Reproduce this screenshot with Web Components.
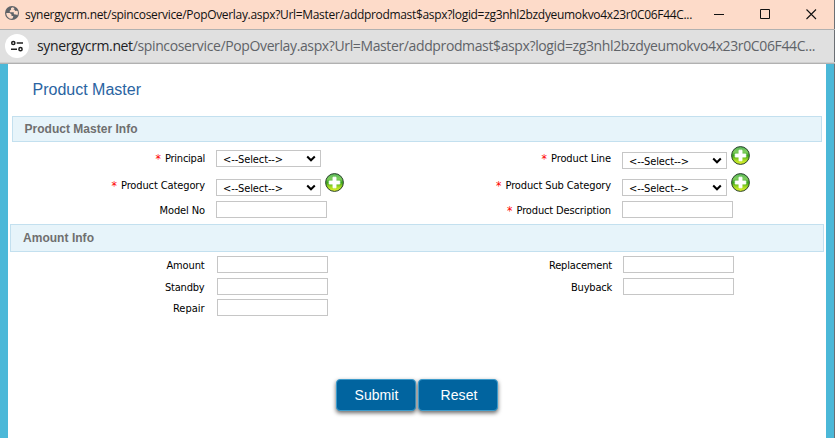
<!DOCTYPE html>
<html lang="en">
<head>
<meta charset="utf-8">
<title>Product Master</title>
<style>
html,body{margin:0;background:#fff;overflow:hidden}
body{width:835px;height:441px;font:11px/14px "DejaVu Sans Condensed","DejaVu Sans",sans-serif;color:#000}
</style>
</head>
<body>
<popup-window>
  <title-bar slot="title"><fit-text w="667">synergycrm.net/spincoservice/PopOverlay.aspx?Url=Master/addprodmast$aspx?logid=zg3nhl2bzdyeumokvo4x23r0C06F44C...</fit-text></title-bar>
  <address-bar slot="address"><fit-text w="778"><span style="color:#202124">synergycrm.net</span>/spincoservice/PopOverlay.aspx?Url=Master/addprodmast$aspx?logid=zg3nhl2bzdyeumokvo4x23r0C06F44C...</fit-text></address-bar>
  <page-heading><fit-text w="108.500">Product Master</fit-text></page-heading>
  <section-bar style="--m:0 4px;--h:26px;--p:11.500px"><fit-text w="113">Product Master Info</fit-text></section-bar>
  <form-row style="--h:31px">
    <form-field required label="Principal" w="40" style="--ct:8px"><select-box></select-box></form-field>
    <form-field required label="Product Line" w="60" style="--ct:10px"><select-box></select-box><add-button style="--t:4px"></add-button></form-field>
  </form-row>
  <form-row style="--h:25px">
    <form-field required label="Product Category" w="84" style="--ct:6px;--lt:6px"><select-box></select-box><add-button></add-button></form-field>
    <form-field required label="Product Sub Category" w="105.500" style="--ct:6px;--lt:6px"><select-box></select-box><add-button></add-button></form-field>
  </form-row>
  <form-row style="--h:26px">
    <form-field label="Model No" w="45.500" style="--ct:3px;--lt:6px"><text-box></text-box></form-field>
    <form-field required label="Product Description" w="94.500" style="--ct:3px;--lt:6px"><text-box></text-box></form-field>
  </form-row>
  <section-bar style="--m:0 2px;--h:28px"><fit-text w="71">Amount Info</fit-text></section-bar>
  <form-row style="--h:22px;--x:1px">
    <form-field label="Amount" w="38" style="--ct:4px;--lt:7px;--lw:195.500px"><text-box></text-box></form-field>
    <form-field label="Replacement" w="63" style="--ct:4px;--lt:7px"><text-box></text-box></form-field>
  </form-row>
  <form-row style="--h:21px;--x:1px">
    <form-field label="Standby" w="39.500" style="--ct:4px;--lt:7px;--lw:195.500px"><text-box></text-box></form-field>
    <form-field label="Buyback" w="41" style="--ct:4px;--lt:7px"><text-box></text-box></form-field>
  </form-row>
  <form-row style="--h:22px;--x:1px">
    <form-field label="Repair" w="31.500" style="--ct:4px;--lt:7px;--lw:195.500px"><text-box></text-box></form-field>
  </form-row>
  <button-row>
    <push-button><fit-text w="44">Submit</fit-text></push-button>
    <push-button style="--p:2px"><fit-text w="37">Reset</fit-text></push-button>
  </button-row>
</popup-window>
<script>
function define(name, html, setup) {
  customElements.define(name, class extends HTMLElement {
    constructor() {
      super();
      this.attachShadow({mode: 'open'});
    }
    connectedCallback() {
      if (this.ready) return;
      this.ready = true;
      this.shadowRoot.innerHTML = html;
      if (setup) setup(this, this.shadowRoot);
    }
  });
}

define('popup-window', `<style>
:host{display:flex;flex-direction:column;width:835px;height:441px}
.frame{display:flex;height:374px;box-sizing:border-box;border-right:1px solid #6b6f74}
.content{flex:1;border:solid #4bb8d8;border-width:0 8px;background:#fff;display:flex;flex-direction:column}
</style><slot name="title"></slot><slot name="address"></slot>
<div class="frame"><div class="content"><slot></slot></div></div>`);

define('title-bar', `<style>
:host{display:flex;align-items:center;height:29px;box-sizing:border-box;background:#fddbc9;border-right:1px solid #6b6f74;padding-left:5px;font:12px/16px "Open Sans","Noto Sans",sans-serif;color:#111}
.globe{width:14px;height:14px;margin-right:6px;margin-top:-3px;flex:none}
.label{flex:1}
.win{width:120px;height:29px;flex:none}
</style>
<svg class="globe" viewBox="0 0 14 14"><circle cx="7" cy="7" r="7" fill="#5f6368"/><path d="M7.2 1.3 6 2.3v1.500L4.800 4.700v1.500h4v1.700l1 .5h1.300l1.300.9.6-2.300-.4-2-1.100-.2-1.600.1V3.700H8.500l1-1.800z" fill="#fddbc9"/><path d="M1.300 6.900h3.600l1.600 1.600v1.400h1.700v1l-.9 1.900C3.700 13 1.200 10 1.300 6.900z" fill="#fddbc9"/></svg>
<div class="label"><slot></slot></div>
<svg class="win" viewBox="0 0 120 29" fill="none" stroke="#111" stroke-width="1"><path d="M0 14.500h10M46.500 9.500h9v9h-9z"/><path d="M92.500 9.500l9.500 9.500M102 9.500l-9.500 9.500" stroke-width="1.100"/></svg>`);

define('address-bar', `<style>
:host{display:flex;align-items:center;height:35px;box-sizing:border-box;background:#e0e0e0;border:solid #b1b1b1;border-width:1px 0 1px;box-shadow:inset 0 -1px #cfcfcf,inset -1px 0 #6b6f74;padding:0 0 1px 5px;font:14px/20px "Open Sans","Noto Sans",sans-serif;color:#5f6368}
svg{width:24px;height:24px;margin-right:8px;flex:none}
</style>
<svg viewBox="0 0 24 24"><circle cx="12" cy="12" r="12" fill="#fff"/><g fill="none" stroke="#1f1f1f" stroke-width="1.500"><circle cx="8.300" cy="9" r="1.600"/><path d="M11.700 9H18M6 15.200h6"/><circle cx="15.500" cy="15.200" r="1.600"/></g></svg><slot></slot>`);

define('page-heading', `<style>
:host{display:block;height:52px;box-sizing:border-box;padding:16px 0 0 24.500px;font:16px/20px "Liberation Sans",Arial,sans-serif;color:#2a64a2}
</style><slot></slot>`);

define('section-bar', `<style>
:host{display:flex;align-items:center;height:var(--h);box-sizing:border-box;margin:var(--m);border:1px solid #c3e0ef;background:#e7f4fa;padding-left:var(--p,12px);font:bold 12px/16px "Liberation Sans",Arial,sans-serif;color:#6f6f6f}
</style><slot></slot>`);

define('form-row', `<style>
:host{display:grid;grid-template-columns:406px 1fr;height:var(--h);margin-left:var(--x,0)}
</style><slot></slot>`);

define('form-field', `<style>
:host{display:flex;align-items:flex-start}
.label{display:flex;justify-content:flex-end;gap:4px;width:var(--lw,197px);margin-right:calc(208px - var(--lw,197px));padding-top:var(--lt,10px)}
:host([required]) .star{color:#f00;display:block;font:12px/14px "DejaVu Sans Condensed",sans-serif;height:14px}
.star{display:none}
.control{display:flex;align-items:flex-start;gap:4px}
</style><div class="label"><span class="star">*</span><fit-text></fit-text></div><div class="control"><slot></slot></div>`,
(host, root) => {
  const t = document.createElement('fit-text');
  t.setAttribute('w', host.getAttribute('w'));
  t.textContent = host.getAttribute('label');
  root.querySelector('fit-text').replaceWith(t);
});

define('text-box', `<style>
:host{display:block;width:111px;height:17px;box-sizing:border-box;border:1px solid #c6c6c6;background:#fff;margin-top:var(--ct)}
</style>`);

define('select-box', `<style>
:host{display:flex;justify-content:space-between;align-items:center;width:105px;height:17px;box-sizing:border-box;border:1px solid #c6c6c6;background:#fff;margin-top:var(--ct);padding:2px 4px 0 6px}
svg{width:10px;height:7px;margin-top:-3px}
</style><fit-text w="60">&lt;--Select--&gt;</fit-text><svg viewBox="0 0 10 7"><path d="M1.200 1.500 5 5.300l3.800-3.800" fill="none" stroke="#000" stroke-width="2"/></svg>`);

define('add-button', `<style>
:host{display:block;width:19px;height:19px;margin-top:var(--t,0)}
svg{display:block}
</style><svg width="19" height="19" viewBox="0 0 19 19"><defs><linearGradient id="g" x1="0" y1="0" x2="0" y2="1"><stop offset="0" stop-color="#58b85a"/><stop offset=".3" stop-color="#7fce5c"/><stop offset=".5" stop-color="#3ba520"/><stop offset=".75" stop-color="#a4da22"/><stop offset="1" stop-color="#e6f52c"/></linearGradient></defs><circle cx="9.500" cy="9.500" r="8.900" fill="url(#g)" stroke="#27402b" stroke-width="1"/><path d="M8 4.200h3V8h3.800v3H11v3.800H8V11H4.200V8H8z" fill="#fff" stroke="#fff" stroke-width=".9" stroke-linejoin="round"/></svg>`);

define('button-row', `<style>
:host{display:flex;gap:2px;margin:62px 0 0 328px}
</style><slot></slot>`);

define('push-button', `<style>
:host{display:flex;align-items:center;justify-content:center;width:80px;height:32px;padding-left:var(--p,1px);box-sizing:border-box;border:1px solid #3d9bcb;border-radius:4px;background:#01649f;box-shadow:0 2px 4px rgba(0,0,0,.6);color:#fff;font:14px/18px "Liberation Sans",Arial,sans-serif}
</style><slot></slot>`);

// Spreads letter spacing so that a single line occupies the given width.
define('fit-text', `<style>
:host{display:inline-block;white-space:nowrap;flex:none}
</style><slot></slot>`, host => {
  const n = host.textContent.length;
  const natural = host.getBoundingClientRect().width;
  const w = +host.getAttribute('w');
  if (n && w) host.style.letterSpacing = ((w - natural) / n) + 'px';
});
</script>
</body>
</html>
